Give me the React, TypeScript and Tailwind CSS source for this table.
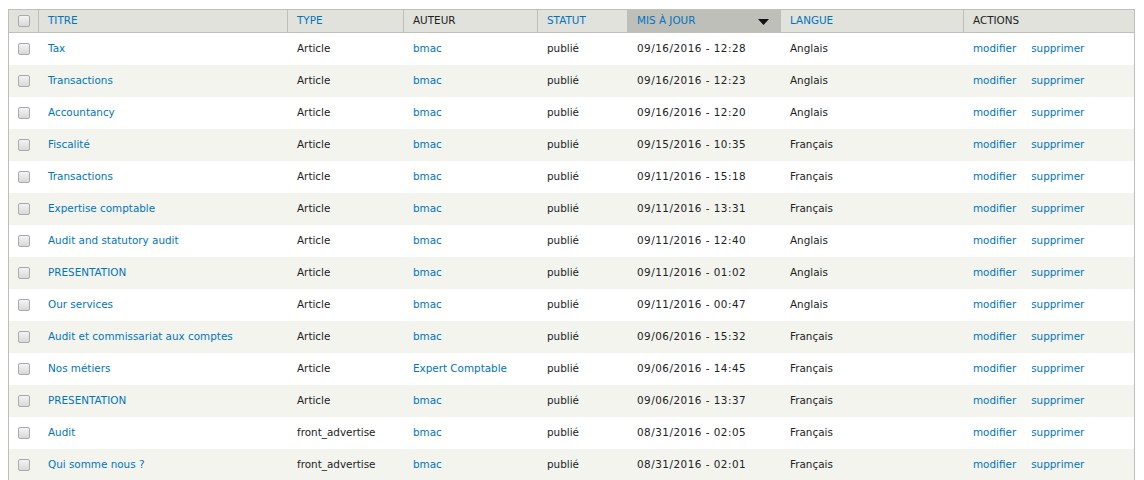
import React from 'react';

type Row = {
  title: string;
  type: string;
  author: string;
  updated: string;
  lang: string;
};

const rows: Row[] = [
  { title: 'Tax', type: 'Article', author: 'bmac', updated: '09/16/2016 - 12:28', lang: 'Anglais' },
  { title: 'Transactions', type: 'Article', author: 'bmac', updated: '09/16/2016 - 12:23', lang: 'Anglais' },
  { title: 'Accountancy', type: 'Article', author: 'bmac', updated: '09/16/2016 - 12:20', lang: 'Anglais' },
  { title: 'Fiscalité', type: 'Article', author: 'bmac', updated: '09/15/2016 - 10:35', lang: 'Français' },
  { title: 'Transactions', type: 'Article', author: 'bmac', updated: '09/11/2016 - 15:18', lang: 'Français' },
  { title: 'Expertise comptable', type: 'Article', author: 'bmac', updated: '09/11/2016 - 13:31', lang: 'Français' },
  { title: 'Audit and statutory audit', type: 'Article', author: 'bmac', updated: '09/11/2016 - 12:40', lang: 'Anglais' },
  { title: 'PRESENTATION', type: 'Article', author: 'bmac', updated: '09/11/2016 - 01:02', lang: 'Anglais' },
  { title: 'Our services', type: 'Article', author: 'bmac', updated: '09/11/2016 - 00:47', lang: 'Anglais' },
  { title: 'Audit et commissariat aux comptes', type: 'Article', author: 'bmac', updated: '09/06/2016 - 15:32', lang: 'Français' },
  { title: 'Nos métiers', type: 'Article', author: 'Expert Comptable', updated: '09/06/2016 - 14:45', lang: 'Français' },
  { title: 'PRESENTATION', type: 'Article', author: 'bmac', updated: '09/06/2016 - 13:37', lang: 'Français' },
  { title: 'Audit', type: 'front_advertise', author: 'bmac', updated: '08/31/2016 - 02:05', lang: 'Français' },
  { title: 'Qui somme nous ?', type: 'front_advertise', author: 'bmac', updated: '08/31/2016 - 02:01', lang: 'Français' },
];

function Checkbox() {
  return (
    <span className="block w-[12px] h-[12px] rounded-[2px] border border-[#aaaaaa] bg-gradient-to-b from-[#f4f4f4] to-[#d8d8d8]" />
  );
}

// header cell: left separator + uppercase label
const th = 'h-[23px] p-0 pl-[9px] pr-[9px] text-left font-normal uppercase border-l border-b border-[#bfbfba] align-middle';
const td = 'px-[10px] p-0 whitespace-nowrap align-middle';

export default function App() {
  return (
    <div className="bg-white h-[480px] pt-[9px] pl-[8px] overflow-hidden font-['DejaVu_Sans',sans-serif] text-[10.4px] text-[#222222]">
      <table className="w-[1127px] table-fixed border-separate border-spacing-0 border border-[#bfbfba] border-b-0">
        <colgroup>
          <col className="w-[29px]" />
          <col className="w-[249px]" />
          <col className="w-[116px]" />
          <col className="w-[134px]" />
          <col className="w-[90px]" />
          <col className="w-[153px]" />
          <col className="w-[183px]" />
          <col className="w-[171px]" />
        </colgroup>
        <thead>
          <tr className="bg-[#e1e2dc]">
            <th className="h-[23px] p-0 pl-[9px] align-middle border-b border-[#bfbfba]">
              <Checkbox />
            </th>
            <th className={th + ' text-[#0074bd]'}>Titre</th>
            <th className={th + ' text-[#0074bd]'}>Type</th>
            <th className={th + ' text-[#222222]'}>Auteur</th>
            <th className={th + ' text-[#0074bd]'}>Statut</th>
            <th className={th + ' text-[#0074bd] bg-[#bfbfba]'}>
              <div className="flex items-center justify-between">
                <span>Mis à jour</span>
                <svg width="11" height="6" viewBox="0 0 11 6" className="mr-[2px] mt-[2px]">
                  <path d="M0 0 H11 L5.5 6 Z" fill="#111" />
                </svg>
              </div>
            </th>
            <th className={th + ' text-[#0074bd]'}>Langue</th>
            <th className={th + ' text-[#222222]'}>Actions</th>
          </tr>
        </thead>
        <tbody>
          {rows.map((r, i) => (
            <tr key={i} className={i % 2 === 0 ? 'bg-white h-[32px]' : 'bg-[#f3f4ee] h-[32px]'}>
              <td className="p-0 pl-[9px] align-middle">
                <Checkbox />
              </td>
              <td className={td + ' text-[#0074bd]'}>{r.title}</td>
              <td className={td}>{r.type}</td>
              <td className={td + ' text-[#0074bd]'}>{r.author}</td>
              <td className={td}>publié</td>
              <td className={td + ' tracking-[0.5px]'}>{r.updated}</td>
              <td className={td}>{r.lang}</td>
              <td className={td + ' text-[#0074bd]'}>
                <span className="mr-[15px]">modifier</span>
                <span>supprimer</span>
              </td>
            </tr>
          ))}
        </tbody>
      </table>
    </div>
  );
}
